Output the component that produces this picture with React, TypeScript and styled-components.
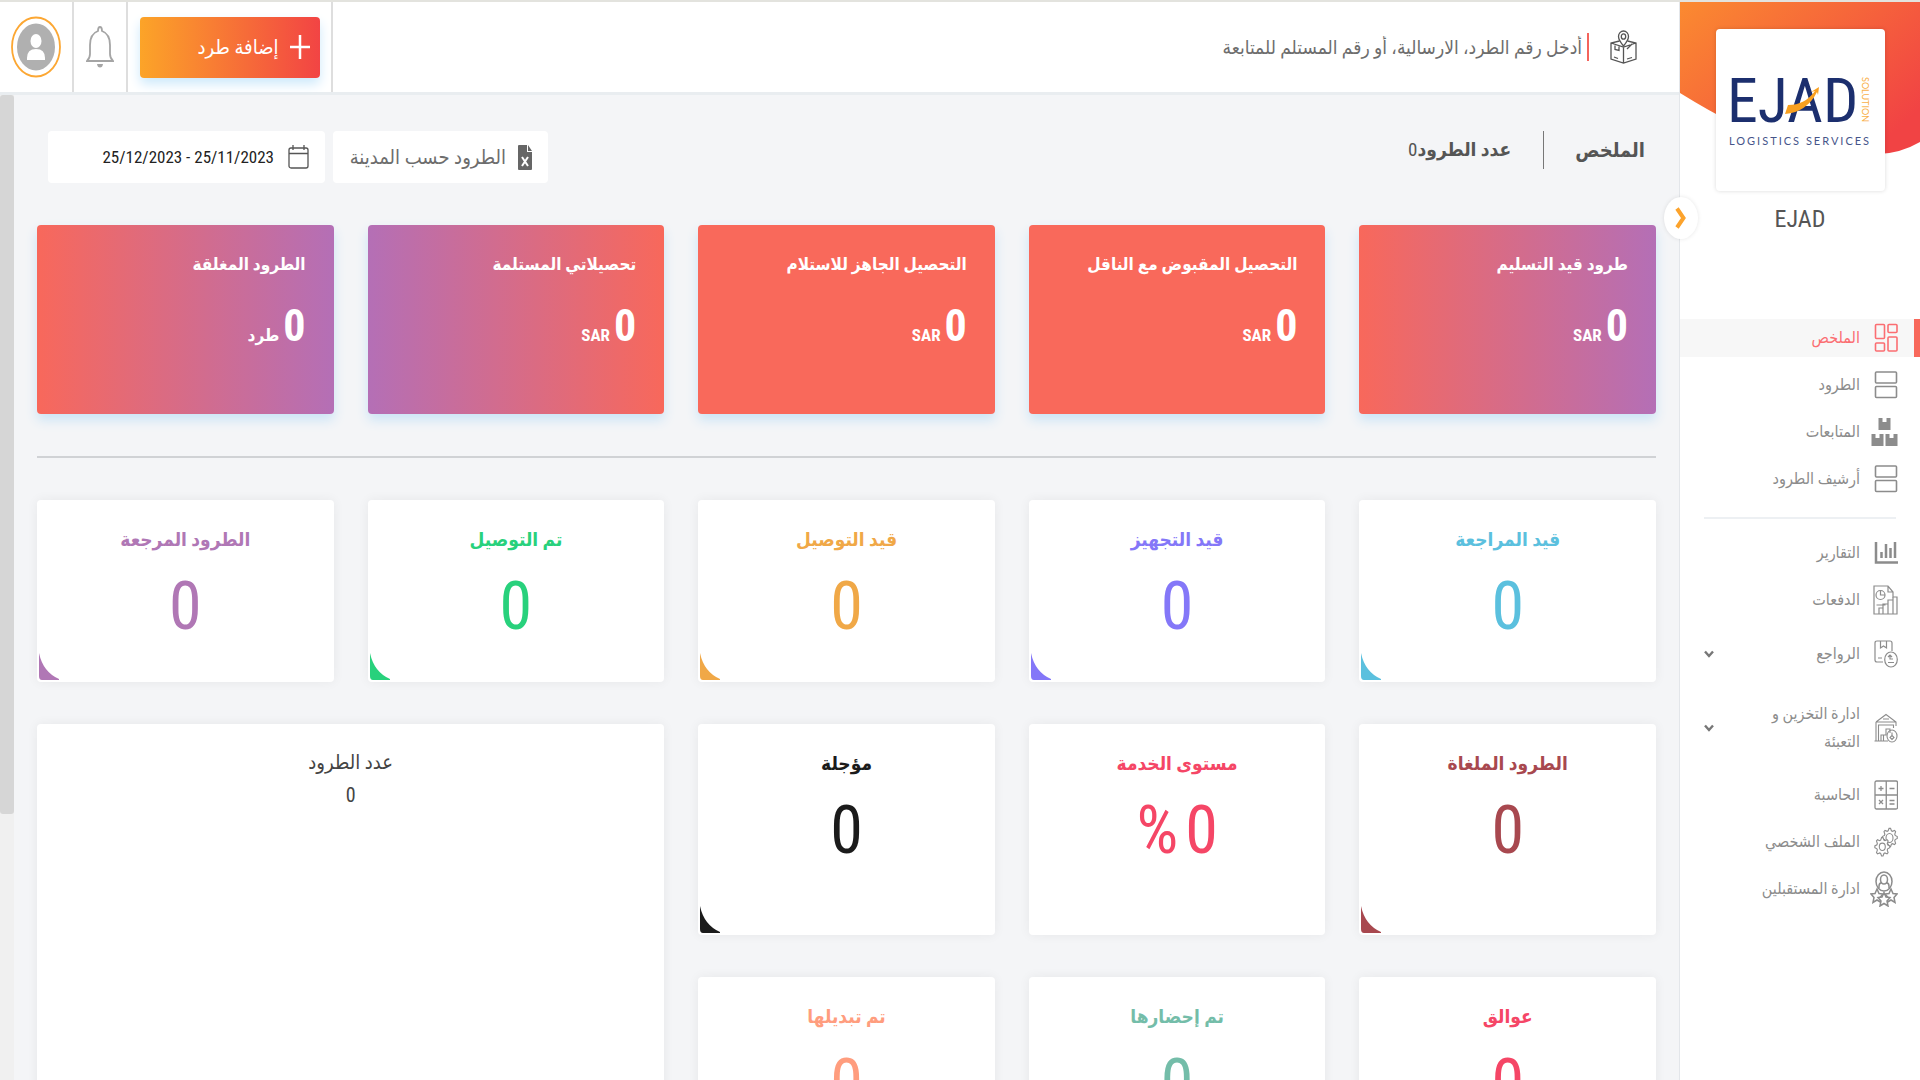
import React from "react";
import styled, { createGlobalStyle, css } from "styled-components";

const latin = `"Roboto Condensed", "Open Sans Condensed", Roboto, "DejaVu Sans Condensed", "DejaVu Sans", sans-serif`;

const GlobalStyle = createGlobalStyle`
  *, *::before, *::after { box-sizing: border-box; }
  body {
    margin: 0;
    background: #f4f5f7;
    color: #555;
    font-family: ${latin};
    font-size: 16px;
  }
  button, input { font: inherit; color: inherit; }
  h1, h2, p, ul { margin: 0; padding: 0; font-weight: inherit; font-size: inherit; }
`;

const Shell = styled.div`
  display: flex;
  height: 100vh;
  overflow: hidden;
  border-top: 2px solid #e3e3de;
`;

/* ---------- sidebar ---------- */

const Sidebar = styled.aside`
  position: relative;
  flex: 0 0 241px;
  background: #fff;
  border-inline-end: 1px solid #e3e6ea;
`;

const Banner = styled.svg`
  position: absolute;
  inset: 0 0 auto 0;
  width: 100%;
  height: 154px;
`;

const Brand = styled.div`
  position: relative;
  display: flex;
  flex-direction: column;
  align-items: center;
  padding-top: 27px;
  height: 317px;
`;

const LogoCard = styled.a`
  display: flex;
  align-items: center;
  justify-content: center;
  width: 169px;
  height: 162px;
  border-radius: 4px;
  background: #fff;
  box-shadow: 0 0 4px rgba(0, 0, 0, 0.15);
`;

const BrandName = styled.p`
  margin-top: 14px;
  font-size: 24px;
  line-height: 28px;
  color: #555;
`;

const Toggle = styled.button`
  position: absolute;
  top: 195px;
  inset-inline-end: -16px;
  z-index: 2;
  display: grid;
  place-items: center;
  width: 34px;
  height: 42px;
  padding: 0;
  border: 0;
  border-radius: 50%;
  background: #fff;
  box-shadow: 0 0 4px rgba(0, 0, 0, 0.1);
`;

const NavList = styled.ul`
  display: flex;
  flex-direction: column;
  gap: 9px;
  list-style: none;
`;

const NavLink = styled.a<{ $active?: boolean; $height: number }>`
  display: grid;
  grid-template-columns: 28px 120px 1fr;
  column-gap: 10px;
  align-items: center;
  min-height: ${(p) => p.$height}px;
  padding-inline: 16px 24px;
  border-inline-start: 6px solid ${(p) => (p.$active ? "#f8685b" : "transparent")};
  background: ${(p) => (p.$active ? "#f7f7f7" : "transparent")};
  color: ${(p) => (p.$active ? "#fb6e72" : "#8c8c8c")};
  font-size: 16px;
  line-height: 28px;
  text-decoration: none;
  svg:last-child { justify-self: end; }
`;

const NavLabel = styled.span`
  max-width: 104px;
`;

const NavRule = styled.li`
  height: 2px;
  margin: 10px 24px 6px;
  background: #edf0f3;
`;

/* ---------- header ---------- */

const Main = styled.div`
  display: flex;
  flex: 1;
  flex-direction: column;
  min-width: 0;
`;

const Header = styled.header`
  display: flex;
  flex: 0 0 93px;
  background: #fff;
  border-bottom: 3px solid #e9edf0;
`;

const Search = styled.label`
  display: flex;
  flex: 1;
  align-items: center;
  padding-inline-start: 42px;
`;

const Caret = styled.span`
  width: 2px;
  height: 28px;
  margin-inline: 21px 5px;
  background: #f4645c;
`;

const SearchInput = styled.input`
  flex: 1;
  border: 0;
  outline: 0;
  padding: 0;
  background: none;
  font-size: 19px;
  &::placeholder { color: #6d6d6d; opacity: 1; }
`;

const HeaderCell = styled.div<{ $width: number }>`
  display: flex;
  flex: 0 0 ${(p) => p.$width}px;
  align-items: center;
  justify-content: center;
  border-inline-start: 2px solid #dedede;
`;

const AddButton = styled.button`
  display: flex;
  align-items: center;
  gap: 11px;
  width: 180px;
  height: 61px;
  padding: 0 10px;
  border: 0;
  border-radius: 4px;
  background: linear-gradient(90deg, #fca428, #f24444);
  box-shadow: 0 6px 12px #cde9fb;
  color: #fff;
  font-size: 20px;
  font-weight: 500;
`;

const IconButton = styled.button`
  display: grid;
  place-items: center;
  padding: 0;
  border: 0;
  background: none;
`;

/* ---------- content ---------- */

const Body = styled.div`
  display: flex;
  flex: 1;
  min-height: 0;
`;

const Track = styled.div`
  flex: 0 0 14px;
  background: #f0f0f0;
`;

const Thumb = styled.div`
  height: 73%;
  border-radius: 3px;
  background: #d6d6d6;
`;

const Content = styled.main`
  flex: 1;
  min-width: 0;
  overflow: hidden;
  padding: 36px 23px 0;
`;

const TitleBar = styled.div`
  display: flex;
  align-items: flex-start;
  padding-inline: 11px;
  height: 94px;
`;

const Heading = styled.h1`
  font-size: 20px;
  line-height: 38px;
  font-weight: 700;
  color: #555;
`;

const Total = styled.p`
  display: flex;
  margin-inline-start: 31px;
  padding-inline-start: 32px;
  border-inline-start: 1px solid #777;
  font-size: 19px;
  line-height: 38px;
  color: #555;
`;

const Filters = styled.div`
  display: flex;
  gap: 8px;
  margin-inline-start: auto;
`;

const filterBox = css`
  display: flex;
  align-items: center;
  height: 52px;
  padding-inline: 16px;
  border: 0;
  border-radius: 4px;
  background: #fff;
`;

const CityButton = styled.button`
  ${filterBox}
  gap: 12px;
  width: 215px;
  color: #6d6d6d;
  font-size: 20px;
`;

const DateBox = styled.label`
  ${filterBox}
  gap: 14px;
  width: 277px;
`;

const DateInput = styled.input`
  width: 200px;
  padding: 0;
  border: 0;
  background: none;
  color: #222;
  font-size: 17px;
  text-align: right;
`;

const Grid = styled.section`
  display: grid;
  grid-template-columns: repeat(5, 1fr);
  gap: 42px 34px;
`;

const fills = {
  end: "linear-gradient(90deg, #f8685b, #b46fb6)",
  flat: "#f9695b",
  start: "linear-gradient(90deg, #b46fb6, #f8685b)",
};

const MoneyCard = styled.article<{ $fill: keyof typeof fills }>`
  height: 189px;
  padding: 23px 28px;
  border-radius: 4px;
  background: ${(p) => fills[p.$fill]};
  box-shadow: 0 6px 12px #cbe4f6;
  color: #fff;
`;

const MoneyTitle = styled.h2`
  font-size: 17px;
  line-height: 32px;
  font-weight: 700;
`;

const MoneyValue = styled.p`
  display: flex;
  align-items: baseline;
  gap: 4px;
  margin-top: 20px;
  font-size: 44px;
  line-height: 52px;
  font-weight: 700;
`;

const Unit = styled.span`
  font-size: 17px;
  font-weight: 700;
`;

const Rule = styled.hr`
  height: 2px;
  margin: 42px 0;
  border: 0;
  background: #d0d2d5;
`;

const StatCard = styled.article<{ $color: string; $tall?: boolean }>`
  position: relative;
  height: ${(p) => (p.$tall ? 211 : 182)}px;
  padding-top: 22px;
  border-radius: 4px;
  background: #fff;
  box-shadow: 0 0 12px rgba(0, 0, 0, 0.06);
  color: ${(p) => p.$color};
  text-align: center;
`;

const StatTitle = styled.h2`
  font-size: 19px;
  line-height: 36px;
  font-weight: 700;
`;

const StatValue = styled.p`
  display: flex;
  justify-content: center;
  gap: 7px;
  margin-top: 14px;
  font-size: 66px;
  line-height: 70px;
  font-weight: 400;
`;

const Corner = styled.svg`
  position: absolute;
  bottom: 2px;
  left: 2px;
`;

const ChartPanel = styled.article`
  grid-column: 4 / span 2;
  grid-row: 2 / span 2;
  padding-top: 22px;
  border-radius: 4px;
  background: #fff;
  box-shadow: 0 0 12px rgba(0, 0, 0, 0.06);
  color: #444;
  text-align: center;
  font-size: 20px;
  line-height: 33px;
`;

/* ---------- drawings ---------- */

type IconProps = { children: React.ReactNode; w?: number; h?: number; box?: string; sw?: number };
const Icon = ({ children, w = 24, h = 30, box = "0 0 24 30", sw = 1.4 }: IconProps) => (
  <svg width={w} height={h} viewBox={box} fill="none" stroke="currentColor" strokeWidth={sw} aria-hidden="true">
    {children}
  </svg>
);

const GridIcon = () => (
  <Icon sw={1.6}>
    <rect x="1.5" y="1.5" width="9" height="14" rx="1" />
    <rect x="14" y="1.5" width="9" height="8" rx="1" />
    <rect x="1.5" y="20" width="9" height="8" rx="1" />
    <rect x="14" y="14" width="9" height="14" rx="1" />
  </Icon>
);
const RowsIcon = () => (
  <Icon sw={1.6}>
    <rect x="1.5" y="2" width="21" height="11" rx="1" />
    <rect x="1.5" y="16.5" width="21" height="11" rx="1" />
  </Icon>
);
const BoxesIcon = () => (
  <Icon w={27} box="0 0 27 30">
    <path
      fill="currentColor"
      stroke="none"
      d="M7.500 1h4v4h4V1h4v12h-12zM.5 17h4v4h4v-4h4v12H.5zM14.500 17h4v4h4v-4h4v12h-12z"
    />
  </Icon>
);
const BarsIcon = () => (
  <Icon>
    <path strokeWidth="2.500" d="M2 4v20.500h22" />
    <path strokeWidth="2.500" d="M7.500 20v-6M12 20V6M16.500 20V10M21 20V4" />
  </Icon>
);
const ReportIcon = () => (
  <Icon w={25} box="0 0 25 30" sw={1.2}>
    <path d="M1 29V1h14l5 6v5h4v17zM15 1v6h5" />
    <circle cx="7.500" cy="10" r="4.500" />
    <path d="M7.500 5.500V10h4.500M3.500 20h9M6 29v-6h4v6M10 29V19h5v10M15 29V15h5v14M20 29V12" />
  </Icon>
);
const ReturnIcon = () => (
  <Icon sw={1.2}>
    <path d="M9 23H3q-2 0-2-2V4q0-2 2-2h13q2 0 2 2v8M6.500 2v7l3-2 3 2V2M4 19h4" />
    <ellipse cx="17" cy="20.500" rx="6.300" ry="7.500" />
    <path d="M14 23.500h6M14 18l2-2 2 2M16 16v4h3" />
  </Icon>
);
const WarehouseIcon = () => (
  <Icon sw={1.1}>
    <path d="M2 9l10-7.500L22 9v4M2 9v19M2 9h20M4.500 28V12h15v3M.5 28H14M7 28v-6h5v-6h4v4M9.500 22v6M9 6h6" />
    <ellipse cx="18" cy="23" rx="5" ry="6" />
    <path d="M18 19.500v3l2 2-2 2-2-2 2-2" />
  </Icon>
);
const CalcIcon = () => (
  <Icon sw={1.3}>
    <rect x="1" y="1" width="22.500" height="28" rx="1.500" />
    <path d="M12.250 1v28M1 15h22.500M4.500 8.500h5M7 6v5M15.500 8.500h5M5 20l4 4M9 20l-4 4M15.500 20.500h5M15.500 24h5" />
  </Icon>
);
const gearPath = (cx: number, cy: number) => {
  const points: string[] = [];
  for (let i = 0; i < 32; i += 1) {
    const angle = ((i - 0.5) * Math.PI) / 16;
    const outer = i % 4 < 2;
    const rx = outer ? 7.5 : 5.6;
    const ry = outer ? 9.2 : 7;
    points.push(`${(cx + rx * Math.cos(angle)).toFixed(2)} ${(cy + ry * Math.sin(angle)).toFixed(2)}`);
  }
  return `M${points.join("L")}Z`;
};
const GearsIcon = () => (
  <Icon sw={1.1}>
    <path d={gearPath(15.8, 10.5)} />
    <ellipse cx="15.500" cy="11" rx="3.500" ry="4.500" />
    <path fill="#fff" d={gearPath(8.3, 19.8)} />
    <ellipse cx="8.300" cy="19.800" rx="3" ry="3.700" />
  </Icon>
);
const starPath = "l2 4.500 4 .5-3 3.500 1 5-4-2.500-4 2.500 1-5-3-3.500 4-.5z";
const ReceiversIcon = () => (
  <Icon w={28} h={36} box="0 0 28 36" sw={1.5}>
    <ellipse cx="14" cy="10.500" rx="8" ry="9.500" />
    <path d="M9 17v-2q0-3 3-3.500M19 17v-2q0-3-3-3.500" />
    <ellipse cx="14" cy="8.500" rx="3.500" ry="4.500" />
    <path fill="#fff" d={`M7 18${starPath}`} />
    <path fill="#fff" d={`M21 18${starPath}`} />
    <path fill="#fff" d={`M14 21.500${starPath}`} />
  </Icon>
);
const ChevronDown = () => (
  <Icon w={10} h={10} box="0 0 10 10" sw={2.4}>
    <path stroke="#777" d="M1 2.500l4 4.500 4-4.500" />
  </Icon>
);
const ParcelPinIcon = () => (
  <Icon w={27} h={34} box="0 0 27 34" sw={1.3}>
    <path d="M9.500 11L1 13v16l12.500 4L26 29V13l-8.500-2M13.500 17v16M1 13l12.500 4L26 13M5 15.500v4l4 1v-4M17 19l5-5M4 27l4 1.500M17 29l5-1.500" />
    <path fill="#fff" d="M13.500 16Q8.500 10 8.500 6.500a5 5.500 0 0 1 10 0Q18.500 10 13.500 16z" />
    <ellipse cx="13.500" cy="6.500" rx="2.200" ry="2.700" />
  </Icon>
);

/* ---------- data ---------- */

type NavItem = { label: string; icon: () => React.ReactElement; height?: number; more?: boolean; active?: boolean };
const primary: NavItem[] = [
  { label: "الملخص", icon: GridIcon, active: true },
  { label: "الطرود", icon: RowsIcon },
  { label: "المتابعات", icon: BoxesIcon },
  { label: "أرشيف الطرود", icon: RowsIcon },
];
const secondary: NavItem[] = [
  { label: "التقارير", icon: BarsIcon },
  { label: "الدفعات", icon: ReportIcon },
  { label: "الرواجع", icon: ReturnIcon, height: 52, more: true },
  { label: "ادارة التخزين و التعبئة", icon: WarehouseIcon, height: 78, more: true },
  { label: "الحاسبة", icon: CalcIcon },
  { label: "الملف الشخصي", icon: GearsIcon },
  { label: "ادارة المستقبلين", icon: ReceiversIcon },
];

const money: { title: string; unit: string; fill: keyof typeof fills }[] = [
  { title: "طرود قيد التسليم", unit: "SAR", fill: "end" },
  { title: "التحصيل المقبوض مع الناقل", unit: "SAR", fill: "flat" },
  { title: "التحصيل الجاهز للاستلام", unit: "SAR", fill: "flat" },
  { title: "تحصيلاتي المستلمة", unit: "SAR", fill: "start" },
  { title: "الطرود المغلقة", unit: "طرد", fill: "end" },
];

type Stat = { title: string; color: string; tall?: boolean; percent?: boolean };
const stats: Stat[] = [
  { title: "قيد المراجعة", color: "#5bc0de" },
  { title: "قيد التجهيز", color: "#8477f8" },
  { title: "قيد التوصيل", color: "#f0a847" },
  { title: "تم التوصيل", color: "#28d17c" },
  { title: "الطرود المرجعة", color: "#b077b5" },
  { title: "الطرود الملغاة", color: "#a8484f", tall: true },
  { title: "مستوى الخدمة", color: "#f54666", tall: true, percent: true },
  { title: "مؤجلة", color: "#1b1b1b", tall: true },
];
const lastRow: Stat[] = [
  { title: "عوالق", color: "#f54666", tall: true },
  { title: "تم إحضارها", color: "#74bda9", tall: true },
  { title: "تم تبديلها", color: "#ff9d7e", tall: true },
];

const NavRow = ({ item }: { item: NavItem }) => (
  <li>
    <NavLink href="#" $active={item.active} $height={item.height ?? 38}>
      <item.icon />
      <NavLabel>{item.label}</NavLabel>
      {item.more ? <ChevronDown /> : null}
    </NavLink>
  </li>
);

const StatTile = ({ stat }: { stat: Stat }) => (
  <StatCard $color={stat.color} $tall={stat.tall}>
    <StatTitle>{stat.title}</StatTitle>
    <StatValue>
      <span>0</span>
      {stat.percent && <span>%</span>}
    </StatValue>
    {!stat.percent && (
      <Corner width="20" height="27" viewBox="0 0 20 27" aria-hidden="true">
        <path fill="currentColor" d="M0 0Q4 19 20 26v1H3q-3 0-3-4z" />
      </Corner>
    )}
  </StatCard>
);

/* ---------- logo ---------- */

const LogoSvg = () => (
  <svg width="150" height="130" viewBox="-4 -26 150 130" direction="ltr" role="img" aria-label="EJAD Logistics Services">
    <text x="-2" y="51" fill="#1c2f6e" fontFamily="'Roboto Condensed', Roboto, sans-serif" fontSize="62" fontWeight="400">
      EJAD
    </text>
    <path fill="#f9a01f" d="M59 34Q76 34 86 20l-4 1 8-5-1 8-1-3Q78 41 56 43z" />
    <text
      transform="translate(133 6) rotate(90)"
      fill="#f9b04a"
      fontFamily="Lato, sans-serif"
      fontSize="9"
    >
      SOLUTION
    </text>
    <text x="0" y="74" fill="#46558a" fontFamily="Lato, sans-serif" fontSize="11" letterSpacing="2">
      LOGISTICS SERVICES
    </text>
  </svg>
);

export default function App() {
  return (
    <>
      <GlobalStyle />
      <Shell dir="rtl" lang="ar">
        <Sidebar>
          <Banner viewBox="0 0 241 154" preserveAspectRatio="none" aria-hidden="true">
            <defs>
              <linearGradient id="banner" x1="0" y1="0" x2="1" y2="0.700">
                <stop offset="0" stopColor="#fb8a30" />
                <stop offset="1" stopColor="#f14344" />
              </linearGradient>
            </defs>
            <path fill="url(#banner)" d="M0 0H241V140Q222 151 200 152 150 154 96 138 60 128 0 91z" />
          </Banner>
          <Brand>
            <LogoCard href="#">
              <LogoSvg />
            </LogoCard>
            <BrandName>EJAD</BrandName>
          </Brand>
          <Toggle aria-label="طي القائمة">
            <Icon w={12} h={22} box="0 0 12 22" sw={4}>
              <path stroke="#fca32c" d="M2 1.500l6.500 9.500L2 20.500" />
            </Icon>
          </Toggle>
          <nav>
            <NavList>
              {primary.map((item) => (
                <NavRow key={item.label} item={item} />
              ))}
              <NavRule role="separator" />
              {secondary.map((item) => (
                <NavRow key={item.label} item={item} />
              ))}
            </NavList>
          </nav>
        </Sidebar>

        <Main>
          <Header>
            <Search>
              <ParcelPinIcon />
              <Caret />
              <SearchInput type="text" placeholder="أدخل رقم الطرد، الارسالية، أو رقم المستلم للمتابعة" />
            </Search>
            <HeaderCell $width={205}>
              <AddButton>
                <Icon w={20} h={24} box="0 0 20 24" sw={2.5}>
                  <path d="M10 0v24M0 12h20" />
                </Icon>
                إضافة طرد
              </AddButton>
            </HeaderCell>
            <HeaderCell $width={54}>
              <IconButton aria-label="التنبيهات">
                <svg width="28" height="42" viewBox="0 0 28 42" fill="none" stroke="#a5a5a5" strokeWidth="1.800">
                  <path d="M12 5q0-4 2-4t2 4q8 3 8 14v9q0 4 3 7H1q3-3 3-7v-9Q4 8 12 5z" />
                  <path fill="#a5a5a5" stroke="none" d="M11 38h6q-.500 3.500-3 3.500T11 38z" />
                </svg>
              </IconButton>
            </HeaderCell>
            <HeaderCell $width={74}>
              <IconButton aria-label="الحساب">
                <svg width="50" height="62" viewBox="0 0 50 62">
                  <ellipse cx="25" cy="31" rx="24" ry="29.500" fill="#fff" stroke="#fca733" strokeWidth="1.800" />
                  <ellipse cx="25" cy="31" rx="19" ry="23.500" fill="#b0b0b0" />
                  <ellipse cx="25" cy="25" rx="5.500" ry="7" fill="#fff" />
                  <path fill="#fff" d="M16 44v-2q0-9 9-9t9 9v2z" />
                </svg>
              </IconButton>
            </HeaderCell>
          </Header>

          <Body>
            <Content>
              <TitleBar>
                <Heading>الملخص</Heading>
                <Total>
                  <strong>عدد الطرود</strong>
                  <span>0</span>
                </Total>
                <Filters>
                  <CityButton>
                    <svg width="14" height="25" viewBox="0 0 14 25" aria-hidden="true">
                      <path fill="#666" d="M1 0h8v7h5v17q0 1-1 1H1q-1 0-1-1V1q0-1 1-1zM10 0l4 6h-4z" />
                      <path stroke="#fff" strokeWidth="2" d="M4 12l6 9M10 12l-6 9" />
                    </svg>
                    الطرود حسب المدينة
                  </CityButton>
                  <DateBox>
                    <Icon w={21} h={24} box="0 0 21 24" sw={1.3}>
                      <rect x="1" y="3" width="19" height="20" rx="2" />
                      <path d="M1 8.500h19M5 0v5M16 0v5" />
                    </Icon>
                    <DateInput aria-label="الفترة" type="text" dir="ltr" readOnly value="25/12/2023 - 25/11/2023" />
                  </DateBox>
                </Filters>
              </TitleBar>

              <Grid>
                {money.map((m) => (
                  <MoneyCard key={m.title} $fill={m.fill}>
                    <MoneyTitle>{m.title}</MoneyTitle>
                    <MoneyValue>
                      <span>0</span>
                      <Unit>{m.unit}</Unit>
                    </MoneyValue>
                  </MoneyCard>
                ))}
              </Grid>
              <Rule />
              <Grid>
                {stats.map((s) => (
                  <StatTile key={s.title} stat={s} />
                ))}
                <ChartPanel>
                  <h2>عدد الطرود</h2>
                  <p>0</p>
                </ChartPanel>
                {lastRow.map((s) => (
                  <StatTile key={s.title} stat={s} />
                ))}
              </Grid>
            </Content>
            <Track>
              <Thumb />
            </Track>
          </Body>
        </Main>
      </Shell>
    </>
  );
}
